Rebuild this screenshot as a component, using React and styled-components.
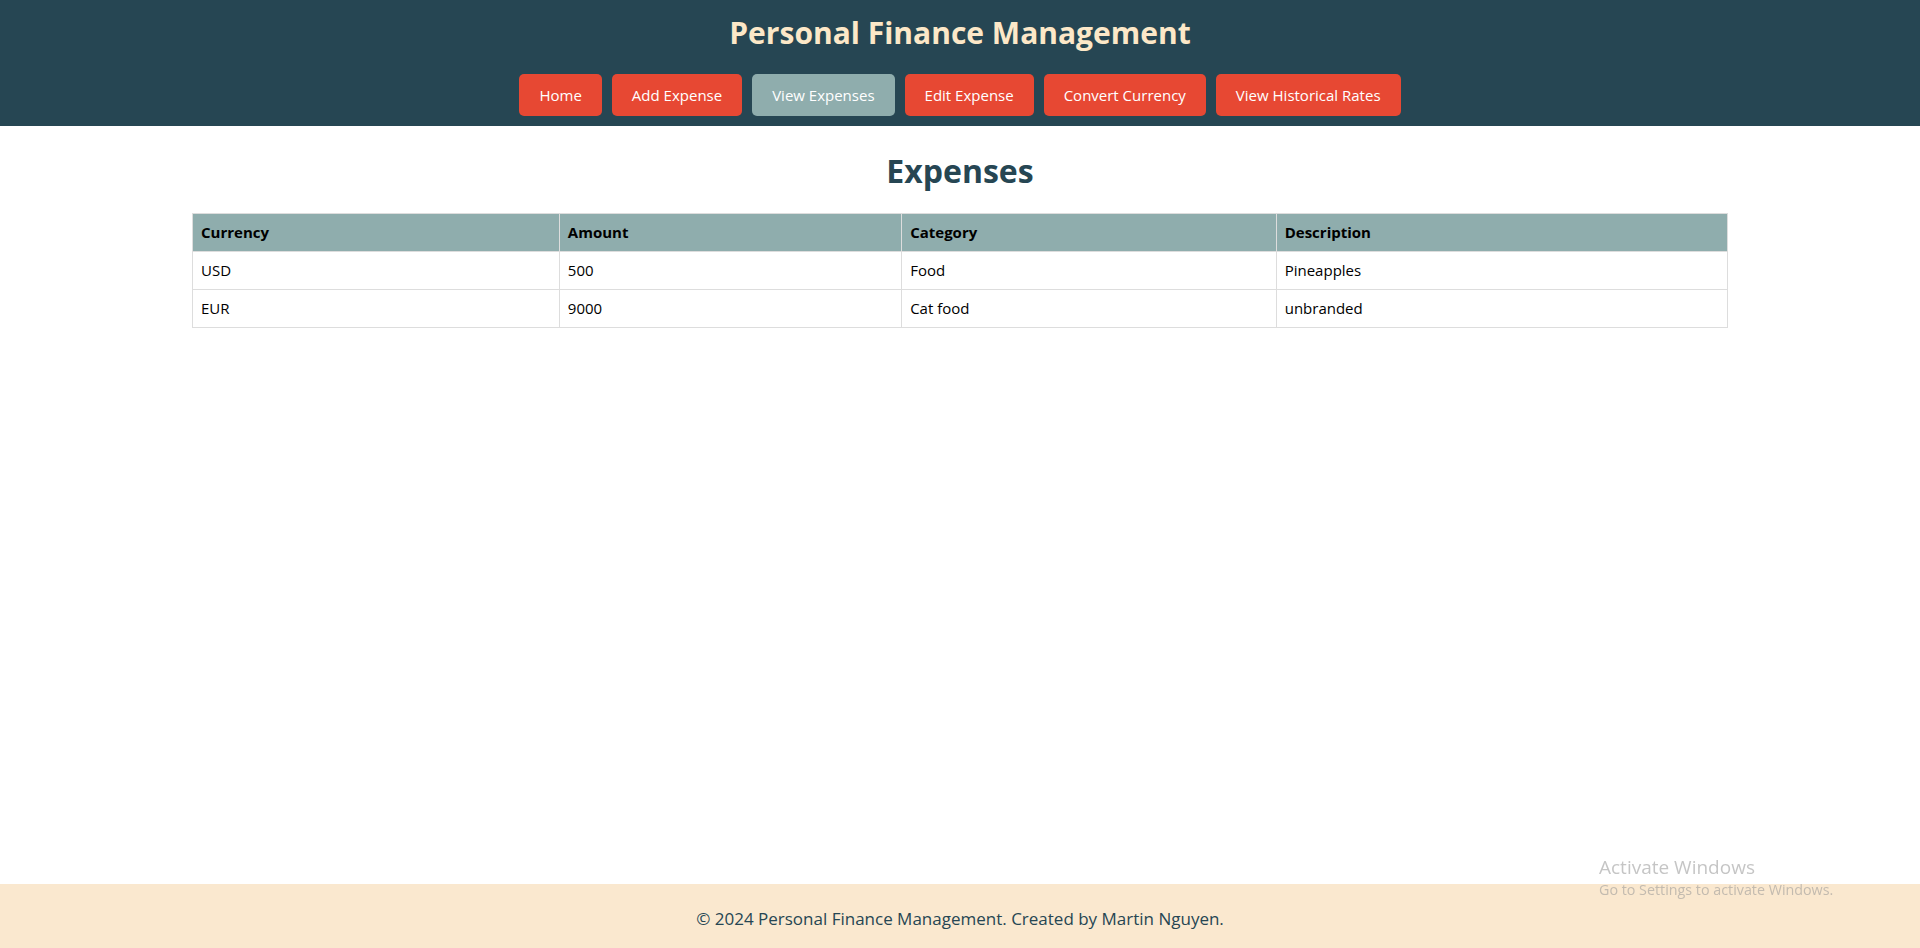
import React from "react";
import styled, { createGlobalStyle } from "styled-components";

const FONT = `"Open Sans", "Noto Sans", "Liberation Sans", sans-serif`;

const Global = createGlobalStyle`
  html, body { margin: 0; padding: 0; }
  body { font-family: ${FONT}; background: #ffffff; color: #264653; }
  #root { min-height: 100vh; }
`;

const Page = styled.div`
  min-height: 100vh;
  display: flex;
  flex-direction: column;
`;

const Header = styled.header`
  background: #264653;
  padding: 11px 0 10px;
  display: flex;
  flex-direction: column;
  align-items: center;
`;

const Title = styled.h1`
  margin: 0 0 19px;
  font-size: 30px;
  line-height: 44px;
  font-weight: 700;
  color: #fce8c8;
`;

const Nav = styled.nav`
  display: flex;
  gap: 10px;
  justify-content: center;
`;

const NavButton = styled.a`
  display: block;
  padding: 10px 20px;
  font-size: 15px;
  line-height: 22px;
  border-radius: 5px;
  color: #ffffff;
  text-decoration: none;
  background: ${(p) => (p.$active ? "#8fadad" : "#e74833")};
`;

const Main = styled.main`
  flex: 1;
  display: flex;
  flex-direction: column;
  align-items: center;
  padding-top: 20px;
`;

const Heading = styled.h2`
  margin: 0 0 17px;
  font-size: 32px;
  line-height: 50px;
  font-weight: 700;
  color: #264653;
`;

const Table = styled.table`
  width: 80%;
  border-collapse: collapse;
  table-layout: fixed;
  font-size: 15px;
  color: #000;
`;

const Col = styled.col`
  width: ${(p) => p.$w};
`;

const Th = styled.th`
  background: #8fadad;
  text-align: left;
  font-weight: 700;
  padding: 8px;
  line-height: 21px;
  border: 1px solid #dddddd;
`;

const Td = styled.td`
  padding: 8px;
  line-height: 21px;
  border: 1px solid #dddddd;
`;

const Footer = styled.footer`
  background: #fae8cf;
  height: 64px;
  box-sizing: border-box;
  padding-top: 4px;
  display: flex;
  align-items: center;
  justify-content: center;
  font-size: 17px;
  color: #264653;
`;

const Watermark = styled.div`
  position: fixed;
  left: 1599px;
  top: 855px;
  color: rgba(150, 150, 150, 0.55);
  pointer-events: none;
  font-family: ${FONT};
`;

const WmTitle = styled.div`
  font-size: 19px;
  line-height: 25px;
`;

const WmSub = styled.div`
  font-size: 14.3px;
  line-height: 19px;
`;

const navItems = [
  "Home",
  "Add Expense",
  "View Expenses",
  "Edit Expense",
  "Convert Currency",
  "View Historical Rates",
];

const columns = [
  ["Currency", "23.9%"],
  ["Amount", "22.3%"],
  ["Category", "24.4%"],
  ["Description", "29.4%"],
];

const rows = [
  ["USD", "500", "Food", "Pineapples"],
  ["EUR", "9000", "Cat food", "unbranded"],
];

export default function App() {
  return (
    <Page>
      <Global />
      <Header>
        <Title>Personal Finance Management</Title>
        <Nav>
          {navItems.map((n) => (
            <NavButton key={n} href="#" $active={n === "View Expenses"}>
              {n}
            </NavButton>
          ))}
        </Nav>
      </Header>
      <Main>
        <Heading>Expenses</Heading>
        <Table>
          <colgroup>
            {columns.map(([name, w]) => (
              <Col key={name} $w={w} />
            ))}
          </colgroup>
          <thead>
            <tr>
              {columns.map(([name]) => (
                <Th key={name}>{name}</Th>
              ))}
            </tr>
          </thead>
          <tbody>
            {rows.map((r, i) => (
              <tr key={i}>
                {r.map((c, j) => (
                  <Td key={j}>{c}</Td>
                ))}
              </tr>
            ))}
          </tbody>
        </Table>
      </Main>
      <Footer>© 2024 Personal Finance Management. Created by Martin Nguyen.</Footer>
      <Watermark>
        <WmTitle>Activate Windows</WmTitle>
        <WmSub>Go to Settings to activate Windows.</WmSub>
      </Watermark>
    </Page>
  );
}
